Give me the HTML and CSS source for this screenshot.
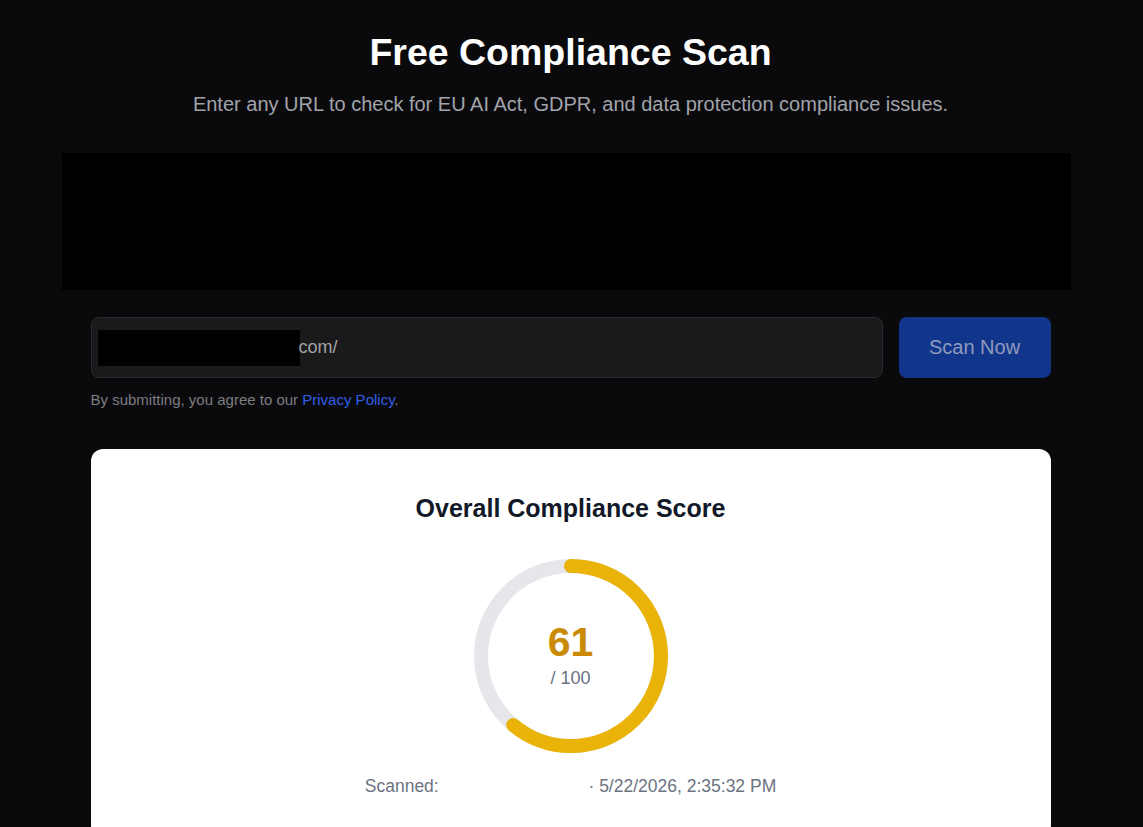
FILE: index.html
```html
<!doctype html>
<html lang="en">
<head>
	<meta charset="UTF-8">
	<title>Free Compliance Scan</title>
	<link rel="stylesheet" href="styles.css">
</head>
<body>
	<div class="page">
		<h1 class="title">Free Compliance Scan</h1>
		<p class="subtitle">Enter any URL to check for EU AI Act, GDPR, and data protection compliance issues.</p>

		<div class="banner"></div>

		<form class="scan-form" action="#">
			<div class="scan-row">
				<div class="url-input">
					<span class="redact"></span><span class="url-text">com/</span>
				</div>
				<button type="button" class="scan-btn">Scan Now</button>
			</div>
			<p class="agree">By submitting, you agree to our <a href="#">Privacy Policy</a>.</p>
		</form>

		<div class="card">
			<h2 class="card-title">Overall Compliance Score</h2>
			<div class="ring">
				<svg width="200" height="200" viewBox="0 0 200 200">
					<circle cx="100" cy="100" r="90" fill="none" stroke="#e5e7eb" stroke-width="14"/>
					<circle cx="100" cy="100" r="90" fill="none" stroke="#eab308" stroke-width="14"
						stroke-linecap="round" stroke-dasharray="344.9 565.5" transform="rotate(-90 100 100)"/>
				</svg>
				<div class="ring-label">
					<span class="score">61</span>
					<span class="out-of">/ 100</span>
				</div>
			</div>
			<p class="scanned">Scanned: <span class="domain"></span> · 5/22/2026, 2:35:32 PM</p>
		</div>
	</div>
</body>
</html>
```

FILE: styles.css
```css
body{ margin: 0; background: #0a0a0c; font-family: "Liberation Sans", Arial, sans-serif; overflow: hidden;}
.page{ width: 960px; margin: 0 auto; padding-top: 32px; position: relative; left: -1px;}
.title{ margin: 0; font-size: 37.5px; line-height: 40px; font-weight: 700; color: #fff; text-align: center;}
.subtitle{ margin: 18px 0 0; font-size: 20px; line-height: 28px; color: #a1a3ab; text-align: center;}
.banner{ height: 137px; margin: 35px -20px 0 -29px; background: #000;}

.scan-form{ margin-top: 27px;}
.scan-row{ display: flex; gap: 16px;}
.url-input{ flex: 1; height: 61px; box-sizing: border-box; display: flex; align-items: center; padding: 0 6px; background: #1a1a1d; border: 1px solid #2a2a2e; border-radius: 8px;}
.redact{ width: 202px; height: 36px; background: #000; display: inline-block;}
.url-text{ font-size: 18px; color: #a3a3a3; margin-left: -1px;}
.scan-btn{ width: 152px; height: 61px; border: none; border-radius: 8px; background: #12358c; color: #8f9bbb; font-family: inherit; font-size: 20px; cursor: pointer;}
.agree{ margin: 12px 0 0; font-size: 15px; line-height: 20px; color: #7d7d82;}
.agree a{ color: #2f5fe8; text-decoration: none;}

.card{ margin-top: 39px; background: #fff; border-radius: 12px; padding: 43px 0 40px; text-align: center;}
.card-title{ margin: 0; font-size: 25px; line-height: 32px; font-weight: 700; color: #111827;}
.ring{ position: relative; width: 200px; height: 200px; margin: 32px auto 0;}
.ring svg{ display: block;}
.ring-label{ position: absolute; inset: 0; display: flex; flex-direction: column; align-items: center; justify-content: center;}
.score{ font-size: 41px; line-height: 48px; font-weight: 700; color: #ca8a04; margin-top: -4px;}
.out-of{ font-size: 18px; line-height: 24px; color: #6b7280;}
.scanned{ margin: 18px 0 0; font-size: 17.5px; line-height: 24px; color: #6b7280;}
.domain{ display: inline-block; width: 140px;}
```
